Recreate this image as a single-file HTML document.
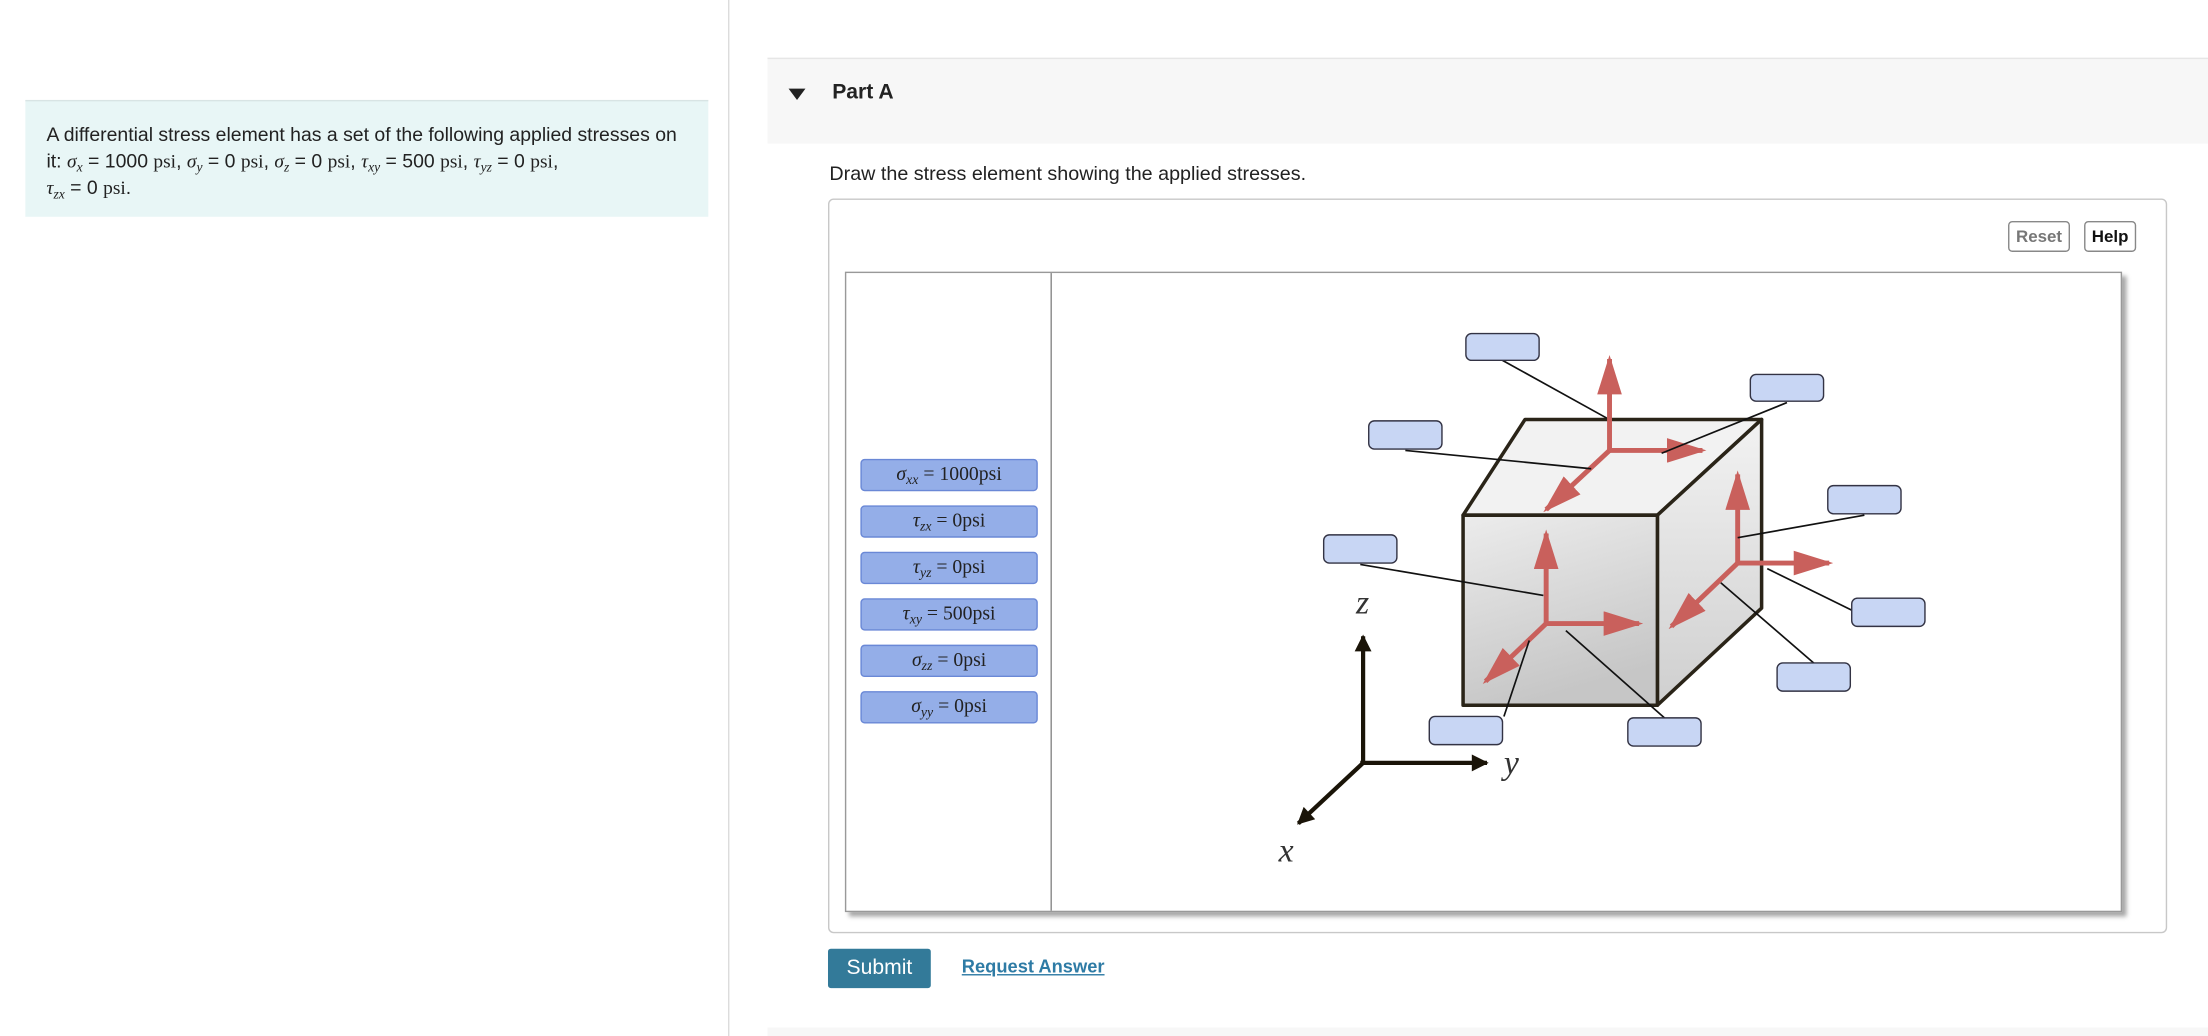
<!DOCTYPE html>
<html><head><meta charset="utf-8">
<style>
html,body{margin:0;padding:0;background:#fff;width:2208px;height:1036px;overflow:hidden}
#w{position:absolute;left:0;top:0;width:1568px;height:736px;transform:scale(1.40816,1.4076);transform-origin:0 0;font-family:"Liberation Sans",sans-serif;color:#222}
.m{font-family:"Liberation Serif",serif;font-style:italic}
.r{font-family:"Liberation Serif",serif}
sub{font-size:70%;vertical-align:-3px;line-height:0}
.abs{position:absolute}
.lbl{position:absolute;left:611px;width:124px;height:21px;background:#94aee8;border:1px solid #6a88d6;border-radius:3px;text-align:center;font-family:"Liberation Serif",serif;font-size:14px;line-height:21px;color:#222;box-sizing:content-box}
</style></head><body><div id="w">
<div class="abs" style="left:517px;top:0;width:1px;height:736px;background:#dcdcdc"></div>
<div class="abs" style="left:18px;top:71px;width:485px;height:82px;background:#e8f6f6;border-top:1px solid #d8e4e4"></div>
<div class="abs" style="left:33px;top:86px;width:460px;font-size:13.8px;line-height:19px">A differential stress element has a set of the following applied stresses on it: <span class="m">σ<sub>x</sub></span> = 1000 <span class="r">psi</span>, <span class="m">σ<sub>y</sub></span> = 0 <span class="r">psi</span>, <span class="m">σ<sub>z</sub></span> = 0 <span class="r">psi</span>, <span class="m">τ<sub>xy</sub></span> = 500 <span class="r">psi</span>, <span class="m">τ<sub>yz</sub></span> = 0 <span class="r">psi</span>,<br><span class="m">τ<sub>zx</sub></span> = 0 <span class="r">psi</span>.</div>

<div class="abs" style="left:545px;top:41px;width:1023px;height:60px;background:#f7f7f7;border-top:1px solid #e6e6e6"></div>
<div class="abs" style="left:560px;top:63px;width:0;height:0;border-left:6px solid transparent;border-right:6px solid transparent;border-top:8px solid #222"></div>
<div class="abs" style="left:591px;top:57px;font-size:15px;font-weight:bold">Part A</div>
<div class="abs" style="left:589px;top:115px;font-size:14px">Draw the stress element showing the applied stresses.</div>

<div class="abs" style="left:588px;top:141px;width:949px;height:520px;border:1px solid #c8c8c8;border-radius:4px"></div>
<div class="abs" style="left:1426px;top:157px;width:42px;height:20px;border:1px solid #888;border-radius:3px;font-size:12px;font-weight:bold;color:#777;text-align:center;line-height:20px">Reset</div>
<div class="abs" style="left:1480px;top:157px;width:35px;height:20px;border:1px solid #888;border-radius:3px;font-size:12px;font-weight:bold;color:#111;text-align:center;line-height:20px">Help</div>

<div class="abs" style="left:600px;top:193px;width:905px;height:453px;border:1px solid #999;box-shadow:3px 3px 3px rgba(0,0,0,0.35);background:#fff"></div>
<div class="abs" style="left:746px;top:194px;width:1px;height:453px;background:#888"></div>

<div class="lbl" style="top:326px"><span class="m">σ<sub>xx</sub></span> = 1000psi</div>
<div class="lbl" style="top:359px"><span class="m">τ<sub>zx</sub></span> = 0psi</div>
<div class="lbl" style="top:392px"><span class="m">τ<sub>yz</sub></span> = 0psi</div>
<div class="lbl" style="top:425px"><span class="m">τ<sub>xy</sub></span> = 500psi</div>
<div class="lbl" style="top:458px"><span class="m">σ<sub>zz</sub></span> = 0psi</div>
<div class="lbl" style="top:491px"><span class="m">σ<sub>yy</sub></span> = 0psi</div>

<svg class="abs" style="left:0;top:0" width="1568" height="736" viewBox="0 0 1568 736">
<defs>
<linearGradient id="gf" x1="0" y1="0" x2="0.3" y2="1"><stop offset="0" stop-color="#ececec"/><stop offset="1" stop-color="#c6c6c6"/></linearGradient>
<linearGradient id="gr" x1="0" y1="0" x2="0" y2="1"><stop offset="0" stop-color="#f2f2f2"/><stop offset="1" stop-color="#cfcfcf"/></linearGradient>
<marker id="ah" viewBox="0 0 10 10" refX="9" refY="5" markerWidth="8" markerHeight="5" orient="auto" markerUnits="strokeWidth" preserveAspectRatio="none"><path d="M0,0 L10,5 L0,10 z" fill="#c9605c"/></marker>
<marker id="bk" viewBox="0 0 10 10" refX="9" refY="5" markerWidth="6" markerHeight="4" orient="auto" markerUnits="strokeWidth"><path d="M0,0 L10,5 L0,10 z" fill="#1a1408"/></marker>
</defs>
<polygon points="1083,298 1251,298 1177,366 1039,366" fill="#f2f2f2" stroke="#2a2418" stroke-width="2.5" stroke-linejoin="round"/>
<polygon points="1177,366 1251,298 1251,432 1177,501" fill="url(#gr)" stroke="#2a2418" stroke-width="2.5" stroke-linejoin="round"/>
<polygon points="1039,366 1177,366 1177,501 1039,501" fill="url(#gf)" stroke="#2a2418" stroke-width="2.5" stroke-linejoin="round"/>
<g stroke="#c9605c" stroke-width="3.5" fill="none" marker-end="url(#ah)">
<line x1="1143" y1="320" x2="1143" y2="255"/>
<line x1="1143" y1="320" x2="1209" y2="320"/>
<line x1="1143" y1="320" x2="1098" y2="362"/>
<line x1="1098" y1="443" x2="1098" y2="379"/>
<line x1="1098" y1="443" x2="1164" y2="443"/>
<line x1="1098" y1="443" x2="1055" y2="484"/>
<line x1="1234" y1="400" x2="1234" y2="337"/>
<line x1="1234" y1="400" x2="1299" y2="400"/>
<line x1="1234" y1="400" x2="1187" y2="445"/>
</g>
<g stroke="#111" stroke-width="1.2">
<line x1="1067" y1="256" x2="1141" y2="297"/>
<line x1="1269" y1="286" x2="1180" y2="322"/>
<line x1="998" y1="320" x2="1130" y2="333"/>
<line x1="1324" y1="366" x2="1234" y2="382"/>
<line x1="966" y1="401" x2="1096" y2="423"/>
<line x1="1316" y1="434" x2="1255" y2="404"/>
<line x1="1288" y1="471" x2="1222" y2="414"/>
<line x1="1068" y1="509" x2="1086" y2="455"/>
<line x1="1182" y1="510" x2="1112" y2="448"/>
</g>
<g fill="#c8d6f4" stroke="#334" stroke-width="1">
<rect x="1041" y="237" width="52" height="19" rx="4"/>
<rect x="1243" y="266" width="52" height="19" rx="4"/>
<rect x="972" y="299" width="52" height="20" rx="4"/>
<rect x="1298" y="345" width="52" height="20" rx="4"/>
<rect x="940" y="380" width="52" height="20" rx="4"/>
<rect x="1315" y="425" width="52" height="20" rx="4"/>
<rect x="1262" y="471" width="52" height="20" rx="4"/>
<rect x="1015" y="509" width="52" height="20" rx="4"/>
<rect x="1156" y="510" width="52" height="20" rx="4"/>
</g>
<g stroke="#1a1408" stroke-width="3" fill="none" marker-end="url(#bk)">
<line x1="968" y1="543" x2="968" y2="452"/>
<line x1="966" y1="542" x2="1056" y2="542"/>
<line x1="968" y1="542" x2="922" y2="585"/>
</g>
<text x="963" y="436" font-family="Liberation Serif,serif" font-style="italic" font-size="24" fill="#333">z</text>
<text x="1068" y="550" font-family="Liberation Serif,serif" font-style="italic" font-size="24" fill="#333">y</text>
<text x="908" y="612" font-family="Liberation Serif,serif" font-style="italic" font-size="24" fill="#333">x</text>
</svg>

<div class="abs" style="left:588px;top:674px;width:73px;height:28px;background:#337a99;border-radius:2px;color:#fff;font-size:15px;text-align:center;line-height:28px">Submit</div>
<div class="abs" style="left:683px;top:679px;font-size:13px;font-weight:bold;color:#2e7ba5;text-decoration:underline">Request Answer</div>
<div class="abs" style="left:545px;top:730px;width:1023px;height:6px;background:#f7f7f7"></div>
</div></body></html>
